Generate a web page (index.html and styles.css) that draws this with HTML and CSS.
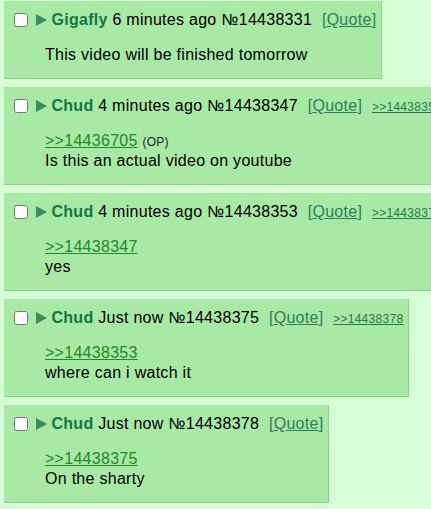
FILE: index.html
```html
<!DOCTYPE html>
<html lang="en">
<head>
    <meta charset="UTF-8">
    <meta name="viewport" content="width=device-width, initial-scale=1.0">
    <title>Thread</title>
    <link rel="stylesheet" href="styles.css">
</head>
<body>

<div class="thread">

    <div class="post">
        <div class="post-info">
            <input type="checkbox" class="post-check">
            <svg class="arrow" width="11" height="12" viewBox="0 0 11 12"><polygon points="0,0 11,6 0,12" /></svg>
            <span class="name">Gigafly</span> 6 minutes ago <span class="post-no">№14438331</span>
            <a class="quote-btn" href="#">[<u>Quote</u>]</a>
        </div>
        <blockquote class="post-body">This video will be finished tomorrow</blockquote>
    </div>

    <div class="post">
        <div class="post-info">
            <input type="checkbox" class="post-check">
            <svg class="arrow" width="11" height="12" viewBox="0 0 11 12"><polygon points="0,0 11,6 0,12" /></svg>
            <span class="name">Chud</span> 4 minutes ago <span class="post-no">№14438347</span>
            <a class="quote-btn" href="#">[<u>Quote</u>]</a>
            <a class="backlink" href="#">&gt;&gt;14438353</a>
        </div>
        <blockquote class="post-body">
            <a class="quotelink" href="#">&gt;&gt;14436705</a> <span class="op-tag">(OP)</span><br>
            Is this an actual video on youtube
        </blockquote>
    </div>

    <div class="post">
        <div class="post-info">
            <input type="checkbox" class="post-check">
            <svg class="arrow" width="11" height="12" viewBox="0 0 11 12"><polygon points="0,0 11,6 0,12" /></svg>
            <span class="name">Chud</span> 4 minutes ago <span class="post-no">№14438353</span>
            <a class="quote-btn" href="#">[<u>Quote</u>]</a>
            <a class="backlink" href="#">&gt;&gt;14438375</a>
        </div>
        <blockquote class="post-body">
            <a class="quotelink" href="#">&gt;&gt;14438347</a><br>
            yes
        </blockquote>
    </div>

    <div class="post">
        <div class="post-info">
            <input type="checkbox" class="post-check">
            <svg class="arrow" width="11" height="12" viewBox="0 0 11 12"><polygon points="0,0 11,6 0,12" /></svg>
            <span class="name">Chud</span> Just now <span class="post-no">№14438375</span>
            <a class="quote-btn" href="#">[<u>Quote</u>]</a>
            <a class="backlink" href="#">&gt;&gt;14438378</a>
        </div>
        <blockquote class="post-body">
            <a class="quotelink" href="#">&gt;&gt;14438353</a><br>
            where can i watch it
        </blockquote>
    </div>

    <div class="post">
        <div class="post-info">
            <input type="checkbox" class="post-check">
            <svg class="arrow" width="11" height="12" viewBox="0 0 11 12"><polygon points="0,0 11,6 0,12" /></svg>
            <span class="name">Chud</span> Just now <span class="post-no">№14438378</span>
            <a class="quote-btn" href="#">[<u>Quote</u>]</a>
        </div>
        <blockquote class="post-body">
            <a class="quotelink" href="#">&gt;&gt;14438375</a><br>
            On the sharty
        </blockquote>
    </div>

</div>

</body>
</html>
```

FILE: styles.css
```css
html {
    overflow: hidden;
}

body {
    font-family: "Liberation Sans", Arial, sans-serif;
    font-size: 16px;
    letter-spacing: 0.28px;
    background: #d6fdd6;
    color: #000;
    margin: 0;
    padding: 1px 4px;
}

.thread {
    display: flex;
    flex-direction: column;
    align-items: flex-start;
    gap: 8px;
}

.post {
    width: max-content;
    background: #a9e9a6;
    border-right: 1px solid #8ccf8a;
    border-bottom: 1px solid #8ccf8a;
    padding: 9px 5px 13px 6px;
}

.post-info {
    white-space: nowrap;
    line-height: 19px;
}

.post-check {
    width: 14px;
    height: 14px;
    margin: 0 3px 0 4px;
    vertical-align: -2px;
}

.arrow {
    fill: #3b8d5c;
    vertical-align: -1px;
}

.name {
    color: #117743;
    font-weight: bold;
}

.quote-btn {
    color: #2d7f5a;
    text-decoration: none;
    margin-left: 5px;
}

.backlink {
    color: #1f7a4c;
    font-size: 12px;
    line-height: 1;
    margin-left: 5px;
}

.post-body {
    margin: 16px 0 0 35px;
    line-height: 20px;
}

.quotelink {
    color: #238a22;
}

.op-tag {
    font-size: 12px;
    line-height: 1;
    color: #222;
}
```
